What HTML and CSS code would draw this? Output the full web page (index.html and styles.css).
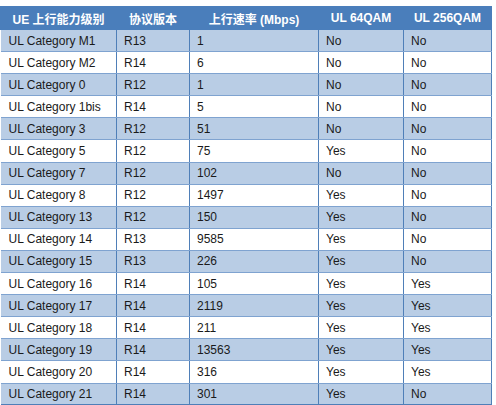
FILE: index.html
```html
<!DOCTYPE html>
<html>
<head>
<meta charset="utf-8">
<link rel="stylesheet" href="styles.css">
</head>
<body>
<table class="spec">
  <colgroup>
    <col class="c1"><col class="c2"><col class="c3"><col class="c4"><col class="c5">
  </colgroup>
  <thead>
    <tr><th>UE 上行能力级别</th><th>协议版本</th><th>上行速率 (Mbps)</th><th>UL 64QAM</th><th>UL 256QAM</th></tr>
  </thead>
  <tbody>
    <tr class="odd"><td>UL Category M1</td><td>R13</td><td>1</td><td>No</td><td>No</td></tr>
    <tr><td>UL Category M2</td><td>R14</td><td>6</td><td>No</td><td>No</td></tr>
    <tr class="odd"><td>UL Category 0</td><td>R12</td><td>1</td><td>No</td><td>No</td></tr>
    <tr><td>UL Category 1bis</td><td>R14</td><td>5</td><td>No</td><td>No</td></tr>
    <tr class="odd"><td>UL Category 3</td><td>R12</td><td>51</td><td>No</td><td>No</td></tr>
    <tr><td>UL Category 5</td><td>R12</td><td>75</td><td>Yes</td><td>No</td></tr>
    <tr class="odd"><td>UL Category 7</td><td>R12</td><td>102</td><td>No</td><td>No</td></tr>
    <tr><td>UL Category 8</td><td>R12</td><td>1497</td><td>Yes</td><td>No</td></tr>
    <tr class="odd"><td>UL Category 13</td><td>R12</td><td>150</td><td>Yes</td><td>No</td></tr>
    <tr><td>UL Category 14</td><td>R13</td><td>9585</td><td>Yes</td><td>No</td></tr>
    <tr class="odd"><td>UL Category 15</td><td>R13</td><td>226</td><td>Yes</td><td>No</td></tr>
    <tr><td>UL Category 16</td><td>R14</td><td>105</td><td>Yes</td><td>Yes</td></tr>
    <tr class="odd"><td>UL Category 17</td><td>R14</td><td>2119</td><td>Yes</td><td>Yes</td></tr>
    <tr><td>UL Category 18</td><td>R14</td><td>211</td><td>Yes</td><td>Yes</td></tr>
    <tr class="odd"><td>UL Category 19</td><td>R14</td><td>13563</td><td>Yes</td><td>Yes</td></tr>
    <tr><td>UL Category 20</td><td>R14</td><td>316</td><td>Yes</td><td>Yes</td></tr>
    <tr class="odd"><td>UL Category 21</td><td>R14</td><td>301</td><td>Yes</td><td>No</td></tr>
  </tbody>
</table>
</body>
</html>
```
FILE: styles.css
```css
html, body {
  margin: 0;
  padding: 0;
  background: #ffffff;
}
body {
  padding-top: 6px;
}
.spec {
  border-collapse: collapse;
  table-layout: fixed;
  width: 491px;
  font-family: "Liberation Sans", Arial, "Noto Sans CJK SC", sans-serif;
  font-size: 12px;
  color: #1a1a1a;
}
.c1 { width: 116px; }
.c2 { width: 73px; }
.c3 { width: 129px; }
.c4 { width: 85px; }
.c5 { width: 88px; }
.spec th {
  background: #4a7ebb;
  color: #ffffff;
  font-weight: bold;
  text-align: center;
  height: 22px;
  padding: 0 4px;
  border: 1px solid #4a7ebb;
  white-space: nowrap;
}
.spec td {
  height: 22.1px;
  padding: 0 0 0 7px;
  text-align: left;
  border-top: 1px solid #7fa3d0;
  border-bottom: 1px solid #7fa3d0;
  border-left: 1px solid #4f7fb8;
  border-right: 1px solid #4f7fb8;
  white-space: nowrap;
  box-sizing: border-box;
}
.spec td:first-child {
  border-left: 0;
  padding-left: 8px;
}
.spec tr.odd td {
  background: #b9cde5;
}
.spec tbody tr:last-child td {
  border-bottom: 2px solid #4f7fb8;
}
```
